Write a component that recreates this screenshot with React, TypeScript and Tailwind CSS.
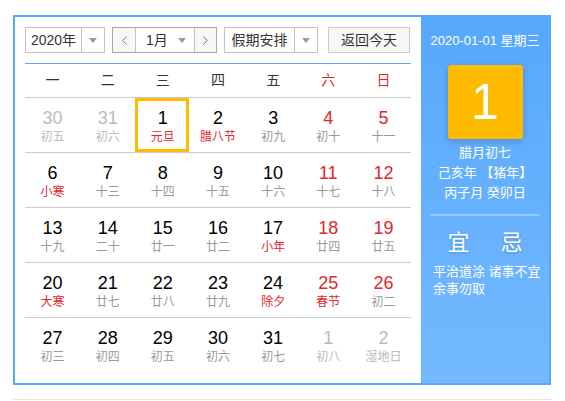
import React from "react";
import { ChevronLeft, ChevronRight } from "lucide-react";

type Day = { n: number; l: string; other?: boolean; fest?: boolean; sel?: boolean };

const weeks: Day[][] = [
  [
    { n: 30, l: "初五", other: true },
    { n: 31, l: "初六", other: true },
    { n: 1, l: "元旦", fest: true, sel: true },
    { n: 2, l: "腊八节", fest: true },
    { n: 3, l: "初九" },
    { n: 4, l: "初十" },
    { n: 5, l: "十一" },
  ],
  [
    { n: 6, l: "小寒", fest: true },
    { n: 7, l: "十三" },
    { n: 8, l: "十四" },
    { n: 9, l: "十五" },
    { n: 10, l: "十六" },
    { n: 11, l: "十七" },
    { n: 12, l: "十八" },
  ],
  [
    { n: 13, l: "十九" },
    { n: 14, l: "二十" },
    { n: 15, l: "廿一" },
    { n: 16, l: "廿二" },
    { n: 17, l: "小年", fest: true },
    { n: 18, l: "廿四" },
    { n: 19, l: "廿五" },
  ],
  [
    { n: 20, l: "大寒", fest: true },
    { n: 21, l: "廿七" },
    { n: 22, l: "廿八" },
    { n: 23, l: "廿九" },
    { n: 24, l: "除夕", fest: true },
    { n: 25, l: "春节", fest: true },
    { n: 26, l: "初二" },
  ],
  [
    { n: 27, l: "初三" },
    { n: 28, l: "初四" },
    { n: 29, l: "初五" },
    { n: 30, l: "初六" },
    { n: 31, l: "初七" },
    { n: 1, l: "初八", other: true },
    { n: 2, l: "湿地日", other: true },
  ],
];

const weekdays = ["一", "二", "三", "四", "五", "六", "日"];

function Caret() {
  return <span className="block w-0 h-0 border-x-[4px] border-x-transparent border-t-[5px] border-t-[#999]" />;
}

function Select({ label, w }: { label: string; w: string }) {
  return (
    <div className={`flex h-[26px] border border-[#c4c4c4] bg-white ${w}`}>
      <div className="flex-1 flex items-center justify-center">{label}</div>
      <div className="w-[23px] border-l border-[#c4c4c4] flex items-center justify-center">
        <Caret />
      </div>
    </div>
  );
}

function Cell({ d, col }: { d: Day; col: number }) {
  const weekend = col >= 5;
  const numColor = d.other ? "text-[#bbbbbb]" : weekend ? "text-[#e3262e]" : "text-black";
  const lunarColor = d.other ? "text-[#bbbbbb]" : d.fest ? "text-[#e3262e]" : "text-[#999999]";
  return (
    <div className="relative flex flex-col items-center pt-[9px]">
      {d.sel && <div className="absolute left-0 top-0 w-[54px] h-[54px] border-[3px] border-[#ffbb00]" />}
      <div className={`text-[18px] leading-[22px] ${numColor}`}>{d.n}</div>
      <div className={`text-[12px] leading-[16px] ${lunarColor}`}>{d.l}</div>
    </div>
  );
}

export default function App() {
  return (
    <div
      className="w-[565px] h-[401px] bg-white pt-[15px] pl-[13px]"
      style={{ fontFamily: '"Liberation Sans", "Noto Sans CJK SC", sans-serif' }}
    >
      <div className="flex w-[538px] h-[370px] border-2 border-[#56a8fb]">
        {/* left: calendar */}
        <div className="w-[406px] px-[10px] pt-[10px] bg-white">
          <div className="flex items-center pb-[10px] border-b border-[#5aabff] text-[14px] text-[#333]">
            <Select label="2020年" w="w-[80px]" />
            <div className="ml-[7px] flex h-[26px] w-[105px] border border-[#a9a9a9]">
              <div className="w-[23px] border-r border-[#c4c4c4] bg-[#f7f7f7] flex items-center justify-center text-[#666]">
                <ChevronLeft size={15} strokeWidth={1.4} />
              </div>
              <div className="flex-1 flex items-center pl-[10px]">
                <span className="flex-1">1月</span>
                <span className="mr-[8px]">
                  <Caret />
                </span>
              </div>
              <div className="w-[22px] border-l border-[#c4c4c4] bg-[#f7f7f7] flex items-center justify-center text-[#666]">
                <ChevronRight size={15} strokeWidth={1.4} />
              </div>
            </div>
            <div className="ml-[7px]">
              <Select label="假期安排" w="w-[94px]" />
            </div>
            <button className="ml-[10px] h-[26px] w-[82px] border border-[#cccccc] bg-[#f7f7f7] text-[14px] text-[#333]">
              返回今天
            </button>
          </div>
          <div className="grid grid-cols-7 h-[34px] border-b border-[#cccccc] text-[14px]">
            {weekdays.map((w, i) => (
              <div key={w} className={`flex items-center justify-center ${i >= 5 ? "text-[#e3262e]" : "text-[#333]"}`}>
                {w}
              </div>
            ))}
          </div>
          {weeks.map((row, r) => (
            <div
              key={r}
              className={`grid grid-cols-7 h-[55px] ${r < weeks.length - 1 ? "border-b border-[#cccccc]" : ""}`}
            >
              {row.map((d, c) => (
                <Cell key={c} d={d} col={c} />
              ))}
            </div>
          ))}
        </div>

        {/* right: day details */}
        <div className="flex-1 flex flex-col items-center pt-[15px] bg-gradient-to-b from-[#56a8fb] to-[#74b9ff] text-white">
          <div className="text-[13px] leading-[18px]">2020-01-01 星期三</div>
          <div className="mt-[15px] w-[75px] h-[74px] rounded-[3px] bg-[#ffbb00] shadow-[0_2px_6px_rgba(0,0,0,0.18)] flex items-center justify-center text-[50px] leading-none">
            1
          </div>
          <div className="mt-[4px] text-[13px] leading-[20px] text-center">
            <div>腊月初七</div>
            <div>己亥年 【猪年】</div>
            <div>丙子月 癸卯日</div>
          </div>
          <div className="mt-[11px] w-[110px] h-[2px] bg-white/30" />
          <div className="mt-[12px] flex justify-center gap-[31px] text-[22px] leading-[30px] [text-shadow:0_1px_3px_rgba(0,0,0,0.2)]">
            <span>宜</span>
            <span>忌</span>
          </div>
          <div className="mt-[5px] self-stretch pl-[12px] pr-[2px] text-[13px] leading-[17px]">
            平治道涂 诸事不宜 余事勿取
          </div>
        </div>
      </div>
      <div className="mt-[14px] w-[538px] border-t border-[#e5e5e5]" />
    </div>
  );
}
